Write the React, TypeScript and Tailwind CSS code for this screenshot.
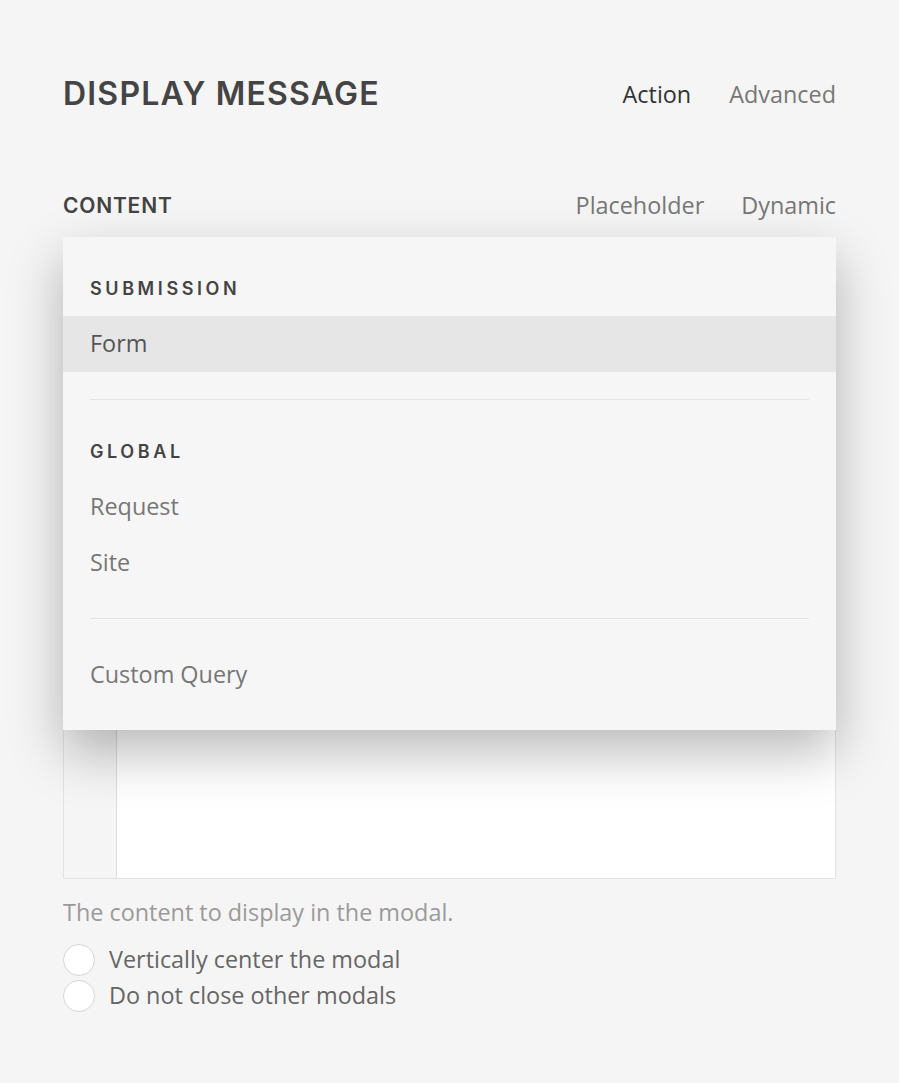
import React from 'react';

const heading = { fontFamily: 'Inter, "DejaVu Sans", sans-serif' };
const body = { fontFamily: '"Open Sans", "Liberation Sans", sans-serif' };

const MenuHeader: React.FC<{ label: string }> = ({ label }) => (
  <div className="h-14 flex items-center px-[27px] text-[18px] font-semibold tracking-[0.2em] text-[#444]" style={heading}>
    {label}
  </div>
);

const MenuItem: React.FC<{ label: string; active?: boolean }> = ({ label, active }) => (
  <div className={`h-14 flex items-center px-[27px] text-[23.4px] ${active ? 'bg-[#e6e6e6] text-[#555]' : 'text-[#777]'}`}>
    {label}
  </div>
);

const Radio: React.FC<{ label: string }> = ({ label }) => (
  <label className="flex items-center gap-[14px] h-8">
    <span className="w-8 h-8 rounded-full bg-white border border-[#d6d6d6] shrink-0" />
    <span className="text-[23.4px] text-[#666]">{label}</span>
  </label>
);

export default function App() {
  return (
    <div className="min-h-[1083px] bg-[#f5f5f5] px-[63px] pt-[73px]" style={body}>
      <div className="flex items-center justify-between h-[42px]">
        <h1 className="text-[32px] font-semibold tracking-[1.2px] text-[#444] leading-none" style={heading}>DISPLAY MESSAGE</h1>
        <div className="flex gap-[38px] text-[23.4px] pt-[2px]">
          <span className="text-[#333]">Action</span>
          <span className="text-[#777]">Advanced</span>
        </div>
      </div>

      <div className="flex items-center justify-between mt-[70px] h-[42px]">
        <span className="text-[21px] font-semibold tracking-[0.8px] text-[#444]" style={heading}>CONTENT</span>
        <div className="flex gap-[37px] text-[23.4px] text-[#777]">
          <span>Placeholder</span>
          <span>Dynamic</span>
        </div>
      </div>

      <div className="relative mt-[10px]">
        <div className="h-[642px] flex border border-[#e2e2e2] bg-white">
          <div className="w-[53px] bg-[#f5f5f5] border-r border-[#dcdcdc]" />
          <div className="flex-1 bg-white" />
        </div>

        <div className="absolute left-0 right-0 top-0 bg-[#f6f6f6] pt-[23px] pb-[27px] shadow-[0_22px_50px_rgba(0,0,0,0.28)]">
          <MenuHeader label="SUBMISSION" />
          <MenuItem label="Form" active />
          <div className="mx-[27px] mt-[27px] mb-[23px] h-px bg-[#e4e4e4]" />
          <MenuHeader label="GLOBAL" />
          <MenuItem label="Request" />
          <MenuItem label="Site" />
          <div className="mx-[27px] mt-[27px] mb-[28px] h-px bg-[#e4e4e4]" />
          <MenuItem label="Custom Query" />
        </div>
      </div>

      <p className="mt-[18px] text-[23.4px] text-[#9a9a9a] leading-[30px]">The content to display in the modal.</p>

      <div className="mt-[17px] flex flex-col gap-1">
        <Radio label="Vertically center the modal" />
        <Radio label="Do not close other modals" />
      </div>
    </div>
  );
}
